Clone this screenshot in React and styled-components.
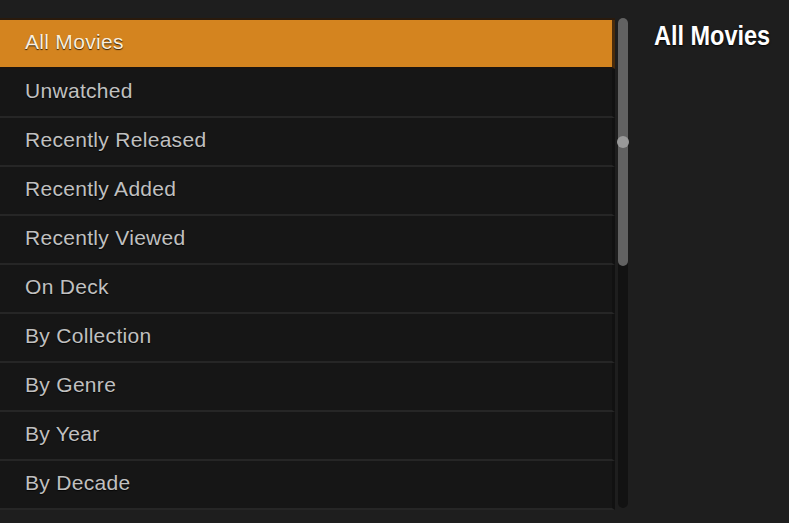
import React from "react";
import styled, { createGlobalStyle } from "styled-components";

const GlobalStyle = createGlobalStyle`
  html, body {
    margin: 0;
    padding: 0;
    background: #1e1e1e;
    font-family: "Liberation Sans", Arial, sans-serif;
  }
`;

const Page = styled.div`
  width: 789px;
  height: 523px;
  display: flex;
  align-items: flex-start;
  background: #1e1e1e;
  overflow: hidden;
`;

const MenuArea = styled.div`
  display: flex;
  margin-top: 18px;
  gap: 3px;
`;

const List = styled.ul`
  list-style: none;
  margin: 0;
  padding: 0;
  width: 615px;
  border-top: 2px solid #2a1a0c;
  display: flex;
  flex-direction: column;
`;

const Row = styled.li`
  box-sizing: border-box;
  height: 49px;
  display: flex;
  align-items: center;
  padding: 0 0 3px 25px;
  font-size: 21px;
  letter-spacing: 0.3px;
  color: ${(p) => (p.$active ? "#fbeedd" : "#c0c0c0")};
  background: ${(p) => (p.$active ? "#d4841f" : "#161616")};
  border-bottom: 2px solid ${(p) => (p.$active ? "#1a1410" : "#262626")};
  border-right: 3px solid ${(p) => (p.$active ? "#4a2c0c" : "#111")};
  text-shadow: 0 1px 1px rgba(0, 0, 0, 0.8);
`;

const Track = styled.div`
  position: relative;
  width: 10px;
  height: 490px;
  background: #121212;
  border-radius: 5px;
`;

const Thumb = styled.div`
  width: 10px;
  height: 248px;
  background: #626262;
  border-radius: 5px;
`;

const Dot = styled.div`
  position: absolute;
  left: -1px;
  top: 118px;
  width: 12px;
  height: 12px;
  border-radius: 50%;
  background: #9a9a9a;
`;

const Side = styled.div`
  flex: 1;
  padding: 21px 0 0 26px;
`;

const Title = styled.h1`
  margin: 0;
  font-size: 27px;
  font-weight: bold;
  color: #fff;
  white-space: nowrap;
  transform: scaleX(0.87);
  transform-origin: left center;
  text-shadow: 0 1px 2px #000;
`;

const items = [
  "All Movies",
  "Unwatched",
  "Recently Released",
  "Recently Added",
  "Recently Viewed",
  "On Deck",
  "By Collection",
  "By Genre",
  "By Year",
  "By Decade",
];

const App = () => {
  return (
    <Page>
      <GlobalStyle />
      <MenuArea>
        <List>
          {items.map((item, i) => (
            <Row key={item} $active={i === 0}>
              {item}
            </Row>
          ))}
        </List>
        <Track>
          <Thumb />
          <Dot />
        </Track>
      </MenuArea>
      <Side>
        <Title>All Movies</Title>
      </Side>
    </Page>
  );
};

export default App;
